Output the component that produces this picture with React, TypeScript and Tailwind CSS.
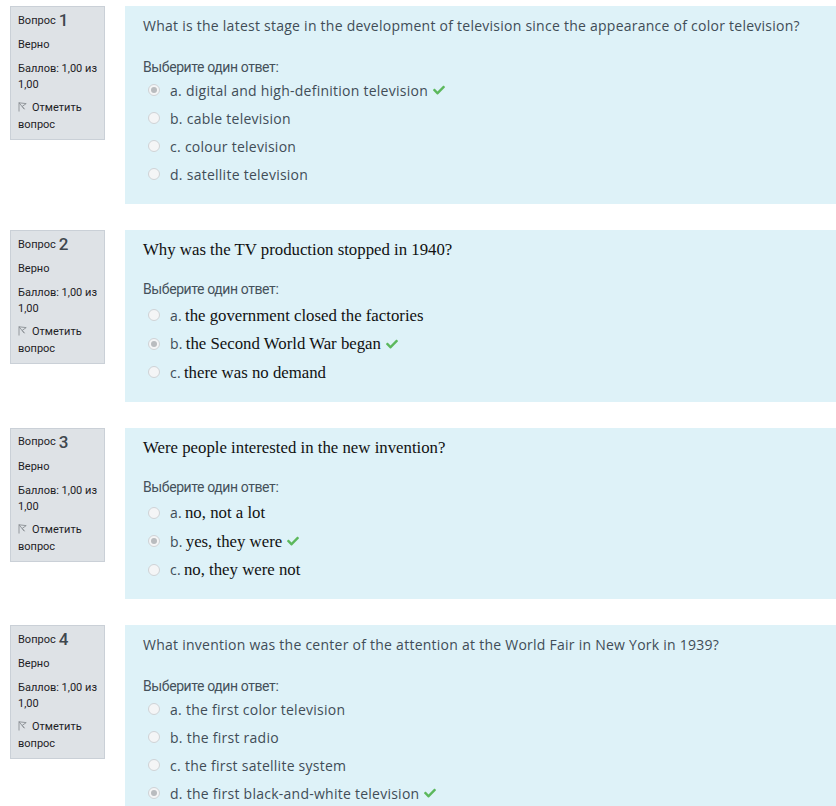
import React from "react"

type Opt = { label: string; text: string; checked?: boolean }
type Q = {
  num: number
  text: string
  serif?: boolean
  options: Opt[]
}

const questions: Q[] = [
  {
    num: 1,
    text: "What is the latest stage in the development of television since the appearance of color television?",
    options: [
      { label: "a.", text: "digital and high-definition television", checked: true },
      { label: "b.", text: "cable television" },
      { label: "c.", text: "colour television" },
      { label: "d.", text: "satellite television" },
    ],
  },
  {
    num: 2,
    text: "Why was the TV production stopped in 1940?",
    serif: true,
    options: [
      { label: "a.", text: "the government closed the factories" },
      { label: "b.", text: "the Second World War began", checked: true },
      { label: "c.", text: "there was no demand" },
    ],
  },
  {
    num: 3,
    text: "Were people interested in the new invention?",
    serif: true,
    options: [
      { label: "a.", text: "no, not a lot" },
      { label: "b.", text: "yes, they were", checked: true },
      { label: "c.", text: "no, they were not" },
    ],
  },
  {
    num: 4,
    text: "What invention was the center of the attention at the World Fair in New York in 1939?",
    options: [
      { label: "a.", text: "the first color television" },
      { label: "b.", text: "the first radio" },
      { label: "c.", text: "the first satellite system" },
      { label: "d.", text: "the first black-and-white television", checked: true },
    ],
  },
]

const Flag = () => (
  <svg width="9" height="10" viewBox="0 0 9 10" className="inline-block mr-[5px] -mt-[2px]">
    <path d="M1 0.5 V9.5 M1 0.8 L8.2 1.6 L4.2 4.4 L6.4 7.2 Z" fill="none" stroke="#8a8f94" strokeWidth="0.9" />
  </svg>
)

const Check = () => (
  <svg width="12" height="10" viewBox="0 0 512 400" className="inline-block ml-[5px]">
    <path
      d="M173.9 389.4L7.5 223c-10-10-10-26.2 0-36.2l36.2-36.2c10-10 26.2-10 36.2 0L192 262.7 432.1 22.6c10-10 26.2-10 36.2 0l36.2 36.2c10 10 10 26.2 0 36.2L210.1 389.4c-10 10-26.2 10-36.2 0z"
      fill="#5cb85c"
    />
  </svg>
)

const Radio = ({ checked }: { checked?: boolean }) => (
  <span className="w-[12px] h-[12px] rounded-full border border-[#cfd3d6] bg-[#f4f5f6] flex items-center justify-center shrink-0">
    {checked && <span className="w-[6px] h-[6px] rounded-full bg-[#b9bcbf]" />}
  </span>
)

const Info = ({ num }: { num: number }) => (
  <div className="w-[95px] shrink-0 self-start bg-[#dee2e6] border border-[#cad0d7] pl-[7px] pr-[4px] pt-[4px] pb-[6px] text-[11px] text-[#1d2125] font-['Roboto',sans-serif]">
    <div className="h-[20px] flex items-center">
      Вопрос <span className="text-[17px] font-medium ml-[3px] text-[#3f474e]">{num}</span>
    </div>
    <div className="mt-[6px] leading-[16px]">Верно</div>
    <div className="mt-[8px] leading-[16px]">
      Баллов: 1,00 из
      <br />
      1,00
    </div>
    <div className="mt-[6px] leading-[17px]">
      <Flag />
      Отметить
      <br />
      вопрос
    </div>
  </div>
)

const sans = "text-[14px] tracking-[0.25px] font-['Open_Sans',sans-serif] whitespace-nowrap text-[#414d57]"
const serif = "text-[16.8px] text-[#111] font-['Liberation_Serif',serif] whitespace-nowrap"

const Question = ({ q }: { q: Q }) => (
  <div className="flex mb-[26px]">
    <div className="ml-[10px]">
      <Info num={q.num} />
    </div>
    <div
      className={
        q.serif
          ? "ml-[20px] flex-1 bg-[#def2f8] pl-[18px] pt-[10px] pb-[15px]"
          : "ml-[20px] flex-1 bg-[#def2f8] pl-[18px] pt-[10px] pb-[16px]"
      }
    >
      <div className={"h-[20px] leading-[20px] " + (q.serif ? serif : sans)}>{q.text}</div>
      <div
        className={
          q.serif
            ? "mt-[19px] h-[20px] leading-[20px] text-[14px] font-['Roboto',sans-serif] tracking-[-0.4px] text-[#45515b]"
            : "mt-[21px] h-[20px] leading-[20px] text-[14px] font-['Roboto',sans-serif] tracking-[-0.4px] text-[#45515b]"
        }
      >
        Выберите один ответ:
      </div>
      <div className={q.serif ? "mt-[2px]" : "-mt-[1px]"}>
        {q.options.map((o) => (
          <div
            key={o.label}
            className={q.serif ? "h-[28.5px] flex items-center pl-[5px]" : "h-[28px] flex items-center pl-[5px]"}
          >
            <Radio checked={o.checked} />
            <span className={"ml-[10px] " + sans}>{o.label}</span>
            <span className={q.serif ? "ml-[3px] " + serif : "ml-[4px] " + sans}>{o.text}</span>
            {o.checked && <Check />}
          </div>
        ))}
      </div>
    </div>
  </div>
)

export default function App() {
  return (
    <div className="w-[836px] h-[806px] overflow-hidden bg-white pt-[6px]">
      {questions.map((q) => (
        <Question key={q.num} q={q} />
      ))}
    </div>
  )
}
